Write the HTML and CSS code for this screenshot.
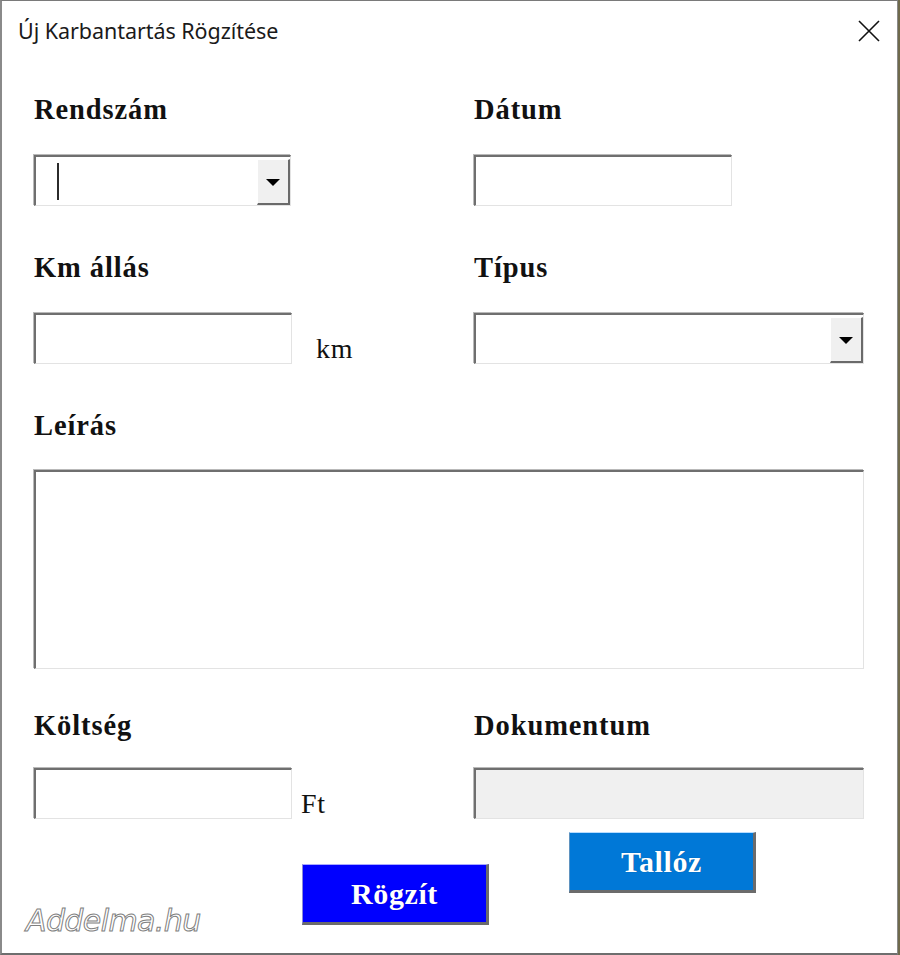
FILE: index.html
```html
<!DOCTYPE html>
<html lang="hu">
<head>
<meta charset="utf-8">
<title>Új Karbantartás Rögzítése</title>
<link rel="stylesheet" href="styles.css">
</head>
<body>
<div class="window">
  <div class="titlebar">
    <span class="title">Új Karbantartás Rögzítése</span>
    <svg class="close" width="22" height="22" viewBox="0 0 22 22" aria-hidden="true">
      <path d="M1 1 L21 21 M21 1 L1 21" stroke="#111" stroke-width="1.6" fill="none"/>
    </svg>
  </div>

  <div class="form">
    <div class="row row-1">
      <div class="field">
        <div class="label">Rendszám</div>
        <div class="box combo w-short">
          <div class="combo-text"><span class="caret"></span></div>
          <div class="drop"><span class="arrow"></span></div>
        </div>
      </div>
      <div class="field">
        <div class="label">Dátum</div>
        <div class="box w-short"></div>
      </div>
    </div>

    <div class="row row-2">
      <div class="field">
        <div class="label">Km állás</div>
        <div class="with-unit">
          <div class="box w-short"></div>
          <span class="unit unit-km">km</span>
        </div>
      </div>
      <div class="field">
        <div class="label">Típus</div>
        <div class="box combo w-wide">
          <div class="combo-text"></div>
          <div class="drop"><span class="arrow"></span></div>
        </div>
      </div>
    </div>

    <div class="row row-3">
      <div class="field full">
        <div class="label label-tight">Leírás</div>
        <div class="box textarea"></div>
      </div>
    </div>

    <div class="row row-4">
      <div class="field">
        <div class="label label-tighter">Költség</div>
        <div class="with-unit">
          <div class="box w-short"></div>
          <span class="unit unit-ft">Ft</span>
        </div>
      </div>
      <div class="field">
        <div class="label label-tighter">Dokumentum</div>
        <div class="box w-wide disabled"></div>
      </div>
    </div>

    <div class="actions">
      <button class="btn btn-save" type="button">Rögzít</button>
      <button class="btn btn-browse" type="button">Tallóz</button>
    </div>
  </div>

  <div class="watermark">Addelma.hu</div>
</div>
</body>
</html>
```

FILE: styles.css
```css
* { box-sizing: border-box; }

html, body {
  margin: 0;
  padding: 0;
}

body {
  width: 900px;
  height: 955px;
  background: #6f6a4c;
  overflow: hidden;
}

.window {
  position: relative;
  width: 898px;
  height: 955px;
  background: #ffffff;
  border-top: 1px solid #7a7a7a;
  border-left: 2px solid #8a8a8a;
  border-right: 1px solid #8a8a8a;
  border-bottom: 2px solid #6e6e6e;
}

.titlebar {
  height: 61px;
  display: flex;
  align-items: center;
  justify-content: space-between;
  padding: 0 17px 2px 16px;
}

.title {
  font-family: "Noto Sans", "Open Sans", sans-serif;
  font-size: 21.5px;
  color: #1a1a1a;
  letter-spacing: -0.05px;
}

.close {
  display: block;
}

.form {
  padding: 33px 0 0 32px;
}

.row {
  display: grid;
  grid-template-columns: 440px 390px;
}

.row-2, .row-3 { margin-top: 47px; }
.row-4 { margin-top: 42px; }

.full { grid-column: 1 / span 2; }

.label {
  font-family: "Liberation Serif", "Times New Roman", serif;
  font-weight: bold;
  font-size: 28.5px;
  letter-spacing: 0.9px;
  line-height: 30px;
  height: 30px;
  color: #111;
  margin-bottom: 30px;
}

.label-tight { margin-bottom: 29px; }
.label-tighter { margin-bottom: 27px; }

.box {
  position: relative;
  height: 51px;
  background: #ffffff;
  border-style: solid;
  border-width: 2px 1px 1px 2px;
  border-color: #6f6f6f #e3e3e3 #e3e3e3 #6f6f6f;
  box-shadow: -1px -1px 0 #b9b9b9;
}

.w-short { width: 258px; }
.w-wide { width: 390px; }
.combo.w-short { width: 257px; }

.textarea {
  width: 830px;
  height: 199px;
}

.disabled {
  background: #f0f0f0;
}

.combo {
  display: flex;
}

.combo-text {
  flex: 1;
  position: relative;
}

.caret {
  position: absolute;
  left: 21px;
  top: 6px;
  width: 2px;
  height: 37px;
  background: #2b2b2b;
}

.drop {
  width: 33px;
  margin-top: 2px;
  background: #f0f0f0;
  border-style: solid;
  border-width: 1px 2px 2px 1px;
  border-color: #ffffff #6a6a6a #6a6a6a #ffffff;
  display: flex;
  align-items: center;
  justify-content: center;
}

.arrow {
  width: 0;
  height: 0;
  border-left: 7px solid transparent;
  border-right: 7px solid transparent;
  border-top: 7px solid #000;
  margin-top: 1px;
}

.with-unit {
  display: flex;
  align-items: flex-end;
}

.unit {
  font-family: "Liberation Serif", "Times New Roman", serif;
  font-size: 28px;
  letter-spacing: 0.8px;
  line-height: 30px;
  height: 30px;
  color: #111;
}

.unit-km { margin-left: 24px; }
.unit-ft { margin-left: 9px; }

.actions {
  display: flex;
  align-items: flex-start;
}

.btn {
  width: 187px;
  height: 61px;
  padding: 0;
  font-family: "Liberation Serif", "Times New Roman", serif;
  font-weight: bold;
  font-size: 30px;
  letter-spacing: 0.6px;
  color: #ffffff;
  border-style: solid;
  border-width: 1px 3px 3px 1px;
  text-shadow: 0 0 1px rgba(0,0,0,0.35);
}

.btn-save {
  margin-left: 268px;
  margin-top: 45px;
  background: #0000ff;
  border-color: #a9a9ff #6b6b6b #6b6b6b #8b8bd8;
}

.btn-browse {
  margin-left: 80px;
  margin-top: 13px;
  background: #0078d7;
  border-color: #b7dcff #6b6b6b #6b6b6b #5f93c0;
}

.watermark {
  position: absolute;
  left: 24px;
  top: 902px;
  font-family: "DejaVu Sans", sans-serif;
  font-style: italic;
  font-size: 30px;
  letter-spacing: -0.6px;
  color: #ffffff;
  -webkit-text-stroke: 1px #808080;
}
```
